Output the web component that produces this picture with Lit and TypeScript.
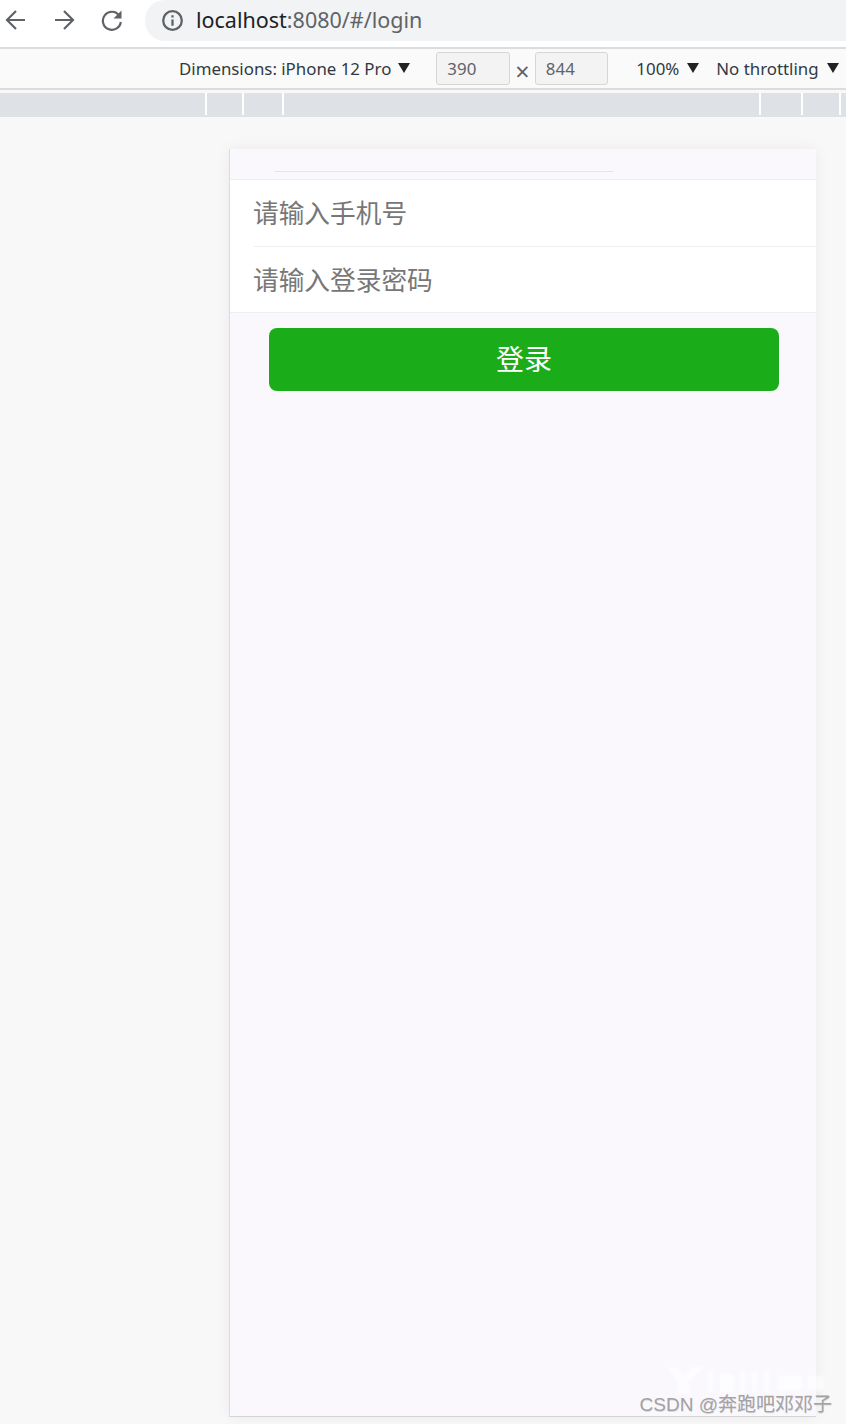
import { LitElement, html, css } from "lit";
import { customElement } from "lit/decorators.js";

const UI_FONT = css`"Noto Sans", "Open Sans", sans-serif`;
const CJK_FONT = css`"Noto Sans CJK SC", "Liberation Sans", sans-serif`;

@customElement("app-root")
export class AppRoot extends LitElement {
  static styles = css`
    :host {
      display: block;
      width: 846px;
      height: 1424px;
      overflow: hidden;
      background: #f8f8f8;
      position: relative;
      font-family: ${UI_FONT};
    }

    .top {
      background: #fff;
      display: flex;
      align-items: flex-start;
      box-sizing: border-box;
      border-bottom: 2px solid #dcdcdc;
      height: 49px;
    }
    .nav {
      display: flex;
      gap: 24px;
      padding: 8px 0 0 4px;
      width: 145px;
      box-sizing: border-box;
    }
    .nav svg {
      width: 24px;
      height: 24px;
      fill: none;
      stroke: #5f6368;
      stroke-width: 2.2;
    }
    .pill {
      flex: 1;
      height: 41px;
      background: #f1f3f4;
      border-radius: 20px 0 0 20px;
      display: flex;
      align-items: center;
      padding-left: 16px;
      gap: 12px;
      font-size: 21.5px;
      color: #5f6368;
    }
    .pill svg {
      width: 23px;
      height: 23px;
      fill: none;
      stroke: #5f6368;
      stroke-width: 2.4;
    }
    .pill b {
      font-weight: 400;
      color: #202124;
    }
    .url {
      padding-bottom: 2px;
    }

    .tools {
      height: 39px;
      background: #fafafa;
      border-bottom: 2px solid #dcdcdc;
      display: flex;
      align-items: center;
      padding-left: 179px;
      font-size: 16.85px;
      color: #303942;
      white-space: nowrap;
    }
    .caret {
      width: 0;
      height: 0;
      border-left: 6px solid transparent;
      border-right: 6px solid transparent;
      border-top: 10px solid #222;
      margin: 0 0 1px 7px;
    }
    .dims {
      margin-left: 26px;
      display: flex;
      align-items: center;
    }
    .box {
      width: 73.5px;
      height: 33px;
      box-sizing: border-box;
      background: #f3f3f3;
      border: 1px solid #d6d6d6;
      border-radius: 3px;
      color: #5f6368;
      padding-left: 10px;
      line-height: 31px;
    }
    .x {
      width: 25px;
      text-align: center;
      color: #5f6368;
      font-size: 25px;
      line-height: 28px;
      padding-top: 5px;
    }
    .zoom {
      margin-left: 28px;
    }
    .zoom + .caret {
      margin-left: 7.5px;
    }
    .throttle {
      margin-left: 17.5px;
    }
    .throttle + .caret {
      margin-left: 8px;
    }

    .ruler {
      margin-top: 3px;
      height: 24px;
      background: #dee1e6;
      display: grid;
      grid-template-columns: 205px 37px 40px 477px 42px 38px 1fr;
    }
    .ruler i {
      height: 22px;
      border-left: 2px solid #fff;
    }
    .ruler i:first-child {
      border-left: 0;
    }

    .device {
      margin: 32px 0 0 229px;
      width: 587px;
      height: 1268px;
      box-sizing: border-box;
      background: #faf8fd;
      border-left: 1px solid #dcdcdc;
      border-bottom: 1px solid #d4d4d4;
      box-shadow: 0 0 14px rgba(0, 0, 0, 0.06);
      font-family: ${CJK_FONT};
    }
    .strip {
      height: 30px;
      box-sizing: border-box;
      padding: 22px 202px 0 44px;
    }
    .strip div {
      height: 1px;
      background: #e6e6ea;
    }
    .form {
      background: #fff;
      border-top: 1px solid #eeeeee;
      border-bottom: 1px solid #eeeeee;
      padding-left: 24px;
    }
    .field {
      height: 66px;
      box-sizing: border-box;
      display: flex;
      align-items: center;
      padding-bottom: 4px;
      text-indent: -1px;
      font-size: 25.7px;
      color: #777;
    }
    .field + .field {
      border-top: 1px solid #eeeeee;
      padding-bottom: 3px;
    }
    .btn {
      display: flex;
      align-items: center;
      justify-content: center;
      margin: 15px 37px 0 39px;
      height: 63px;
      box-sizing: border-box;
      padding-bottom: 4px;
      background: #1aad19;
      color: #fff;
      border-radius: 8px;
      font-size: 28px;
    }

    .smudge {
      position: absolute;
      left: 668px;
      top: 1366px;
      width: 170px;
      height: 28px;
      fill: #fff;
      opacity: 0.6;
      filter: blur(1px);
    }
    .mark {
      position: absolute;
      right: 14px;
      bottom: 6px;
      font-family: ${CJK_FONT};
      font-size: 19px;
      line-height: 26px;
      color: #a2a2a2;
      text-shadow: 0.5px 0.5px 0 rgba(0, 0, 0, 0.12);
      white-space: nowrap;
    }
    .mark span {
      font-family: "Liberation Sans", sans-serif;
    }
  `;

  render() {
    return html`
      <div class="top">
        <div class="nav">
          <svg viewBox="0 0 24 24"><path d="M21 12H3.5M12 3l-9 9 9 9" /></svg>
          <svg viewBox="0 0 24 24"><path d="M3 12h17.5M12 3l9 9-9 9" /></svg>
          <svg viewBox="0 0 24 24">
            <path d="M19.2 7.5a9 9 0 1 0 1.6 6.5" />
            <path d="M21.5 2.5v8h-8z" fill="#5f6368" stroke="none" />
          </svg>
        </div>
        <div class="pill">
          <svg viewBox="0 0 24 24">
            <circle cx="12" cy="12" r="9.7" />
            <path d="M12 11v6.5M12 6.5v2.4" />
          </svg>
          <div class="url"><b>localhost</b>:8080/#/login</div>
        </div>
      </div>
      <div class="tools">
        <span>Dimensions: iPhone 12 Pro</span>
        <div class="caret"></div>
        <div class="dims">
          <div class="box">390</div>
          <div class="x">×</div>
          <div class="box">844</div>
        </div>
        <span class="zoom">100%</span>
        <div class="caret"></div>
        <span class="throttle">No throttling</span>
        <div class="caret"></div>
      </div>
      <div class="ruler">
        <i></i><i></i><i></i><i></i><i></i><i></i><i></i>
      </div>
      <div class="device">
        <div class="strip"><div></div></div>
        <div class="form">
          <div class="field">请输入手机号</div>
          <div class="field">请输入登录密码</div>
        </div>
        <div class="btn">登录</div>
      </div>
      <svg class="smudge" viewBox="0 0 170 28">
        <path d="M0 2h10l6 8 9-9h11L20 16l3 12H10l-1-12z" />
        <rect x="40" y="4" width="5" height="22" />
        <rect x="52" y="8" width="14" height="18" />
        <rect x="72" y="6" width="5" height="20" />
        <rect x="84" y="6" width="5" height="20" />
        <rect x="96" y="6" width="5" height="20" />
        <rect x="110" y="10" width="24" height="14" />
        <rect x="140" y="10" width="16" height="14" />
      </svg>
      <div class="mark"><span>CSDN @</span>奔跑吧邓邓子</div>
    `;
  }
}
